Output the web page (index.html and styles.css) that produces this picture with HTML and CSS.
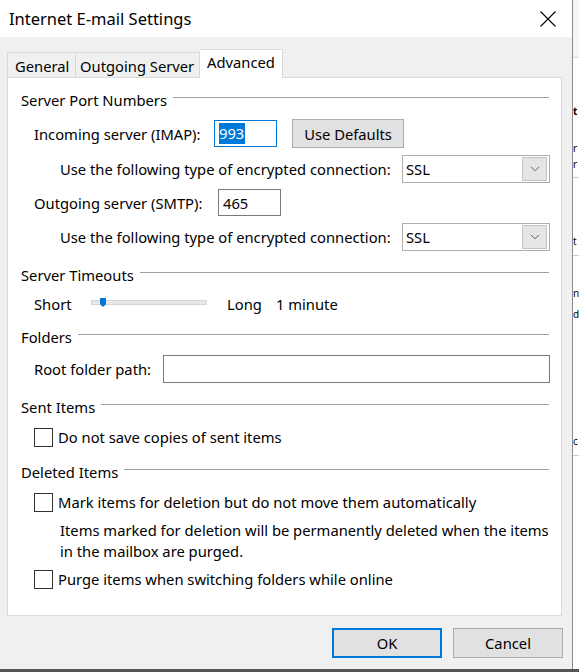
FILE: index.html
```html
<!DOCTYPE html>
<html>
<head>
<meta charset="utf-8">
<link rel="stylesheet" href="styles.css">
</head>
<body>
<div class="screen">
  <div class="dialog">
    <div class="titlebar">
      <span class="title">Internet E-mail Settings</span>
      <svg class="close" width="16" height="16" viewBox="0 0 16 16"><path d="M0.5 0.5 L15.5 15.5 M15.5 0.5 L0.5 15.5" stroke="#000" stroke-width="1.1" fill="none"/></svg>
    </div>
    <div class="body">
      <div class="tabs">
        <div class="tab tab-general">General</div>
        <div class="tab tab-outgoing">Outgoing Server</div>
        <div class="tab tab-active">Advanced</div>
      </div>
      <div class="panel">
        <div class="group g-ports"><span class="glabel">Server Port Numbers</span><span class="gline"></span></div>
        <div class="row r-imap">
          <span class="lbl lbl-imap">Incoming server (IMAP):</span>
          <span class="input port focused"><span class="sel">993</span></span>
          <span class="btn btn-defaults">Use Defaults</span>
        </div>
        <div class="row r-enc1">
          <span class="lbl">Use the following type of encrypted connection:</span>
          <span class="combo"><span class="combo-text">SSL</span><span class="combo-arrow"><svg width="10" height="6" viewBox="0 0 10 6"><path d="M1 0.8 L5 4.8 L9 0.8" stroke="#606060" stroke-width="1" fill="none"/></svg></span></span>
        </div>
        <div class="row r-smtp">
          <span class="lbl lbl-smtp">Outgoing server (SMTP):</span>
          <span class="input port">465</span>
        </div>
        <div class="row r-enc2">
          <span class="lbl">Use the following type of encrypted connection:</span>
          <span class="combo"><span class="combo-text">SSL</span><span class="combo-arrow"><svg width="10" height="6" viewBox="0 0 10 6"><path d="M1 0.8 L5 4.8 L9 0.8" stroke="#606060" stroke-width="1" fill="none"/></svg></span></span>
        </div>
        <div class="group g-timeouts"><span class="glabel">Server Timeouts</span><span class="gline"></span></div>
        <div class="row r-slider">
          <span class="lbl lbl-short">Short</span>
          <span class="track"><span class="thumb"></span></span>
          <span class="lbl lbl-long">Long</span>
          <span class="lbl">1 minute</span>
        </div>
        <div class="group g-folders"><span class="glabel">Folders</span><span class="gline"></span></div>
        <div class="row r-root">
          <span class="lbl lbl-root">Root folder path:</span>
          <span class="input root"></span>
        </div>
        <div class="group g-sent"><span class="glabel">Sent Items</span><span class="gline"></span></div>
        <div class="row r-check r-sent">
          <span class="check"></span><span class="lbl">Do not save copies of sent items</span>
        </div>
        <div class="group g-deleted"><span class="glabel">Deleted Items</span><span class="gline"></span></div>
        <div class="row r-check r-mark">
          <span class="check"></span><span class="lbl">Mark items for deletion but do not move them automatically</span>
        </div>
        <div class="desc">Items marked for deletion will be permanently deleted when the items<br>in the mailbox are purged.</div>
        <div class="row r-check r-purge">
          <span class="check"></span><span class="lbl">Purge items when switching folders while online</span>
        </div>
      </div>
      <div class="buttons">
        <span class="btn btn-ok">OK</span>
        <span class="btn btn-cancel">Cancel</span>
      </div>
    </div>
  </div>
  <div class="behind">
    <div class="bh-top"></div>
    <div class="frag f-t">t</div>
    <div class="frag f-er">r</div>
    <div class="frag f-or">r</div>
    <div class="bh-line l1"></div>
    <div class="frag f-nt">t</div>
    <div class="bh-line l2"></div>
    <div class="frag f-n">n</div>
    <div class="frag f-d">d</div>
    <div class="frag f-c">c</div>
    <div class="bh-line l3"></div>
  </div>
</div>
<div class="bottom-edge"></div>
</body>
</html>
```

FILE: styles.css
```css
* { box-sizing: border-box; }
html, body { margin: 0; padding: 0; }
body {
  width: 579px;
  height: 672px;
  overflow: hidden;
  background: #fff;
  font-family: "Noto Sans", "Open Sans", sans-serif;
  font-size: 14.75px;
  color: #000;
}
.screen { display: flex; height: 669px; }
.dialog {
  width: 573px;
  height: 669px;
  border-right: 1px solid #8a8a8a;
  display: flex;
  flex-direction: column;
  background: #f0f0f0;
  flex-shrink: 0;
}
.titlebar {
  height: 37px;
  background: #fff;
  display: flex;
  align-items: center;
  padding-left: 9px;
  flex-shrink: 0;
}
.title { font-size: 16.5px; margin-top: -1px; }
.close { margin-left: auto; margin-right: 16px; margin-top: 1px; }
.body { flex: 1; display: flex; flex-direction: column; padding: 0 0 0 7px; }
.tabs { display: flex; align-items: flex-end; height: 40px; }
.tab {
  height: 25px;
  border: 1px solid #d9d9d9;
  border-bottom: none;
  background: #f0f0f0;
  display: flex;
  align-items: center;
  padding-top: 1px;
  white-space: nowrap;
}
.tab-general { width: 69px; padding-left: 7px; }
.tab-outgoing { width: 124px; padding-left: 4px; border-left: none; }
.tab-active {
  width: 83px;
  height: 29px;
  background: #fff;
  border-left: none;
  padding-left: 7px;
  padding-bottom: 5px;
  margin-bottom: -1px;
  position: relative;
  z-index: 1;
}
.panel {
  width: 555px;
  height: 539px;
  background: #fff;
  border: 1px solid #d9d9d9;
  padding: 12px 11px 0 13px;
  display: flex;
  flex-direction: column;
}
.group { display: flex; align-items: center; height: 20px; }
.glabel { white-space: nowrap; }
.gline { flex: 1; height: 1px; background: #a0a0a0; margin-left: 6px; margin-right: 1px; margin-top: -5px; }
.g-timeouts { margin-top: 14px; }
.g-folders { margin-top: 13px; }
.g-sent { margin-top: 14px; }
.g-deleted { margin-top: 15px; }
.row { display: flex; align-items: center; white-space: nowrap; }
.r-imap { height: 29px; margin-top: 9px; padding-left: 13px; }
.r-enc1 { height: 28px; margin-top: 7px; padding-left: 39px; }
.r-smtp { height: 27px; margin-top: 6px; padding-left: 13px; }
.r-enc2 { height: 28px; margin-top: 7px; padding-left: 39px; }
.r-slider { height: 20px; margin-top: 9px; padding-left: 13px; }
.r-root { height: 28px; margin-top: 8px; padding-left: 13px; }
.r-check { height: 20px; padding-left: 13px; }
.r-sent { margin-top: 10px; }
.r-mark { margin-top: 10px; }
.r-purge { margin-top: 7px; }
.lbl-imap { width: 180px; }
.lbl-smtp { width: 184px; }
.input {
  display: flex;
  align-items: center;
  background: #fff;
  border: 1px solid #7a7a7a;
  padding-left: 4px;
  flex-shrink: 0;
}
.port { width: 63px; height: 27px; }
.focused { border-color: #0078d7; }
.sel { background: #0078d7; color: #fff; padding: 1px 1px 1px 0; line-height: 19px; }
.btn {
  display: flex;
  align-items: center;
  justify-content: center;
  background: #e1e1e1;
  border: 1px solid #adadad;
  flex-shrink: 0;
}
.btn-defaults { width: 112px; height: 29px; margin-left: 15px; }
.combo {
  margin-left: auto;
  width: 148px;
  height: 28px;
  border: 1px solid #adadad;
  background: #fff;
  display: flex;
  align-items: center;
  padding: 1px 2px 1px 3px;
  flex-shrink: 0;
}
.combo-text { flex: 1; }
.combo-arrow {
  width: 25px;
  height: 24px;
  background: #e5e5e5;
  border: 1px solid #c4c4c4;
  display: flex;
  align-items: center;
  justify-content: center;
}
.lbl-short { width: 57px; }
.track {
  width: 116px;
  height: 5px;
  background: #e7e7e7;
  border: 1px solid #d6d6d6;
  margin-top: -3px;
  position: relative;
  flex-shrink: 0;
}
.thumb {
  position: absolute;
  left: 8px;
  top: -3px;
  width: 6px;
  height: 9px;
  background: #0078d7;
  clip-path: polygon(0 0, 100% 0, 100% 70%, 50% 100%, 0 70%);
}
.lbl-long { margin-left: 20px; width: 49px; }
.lbl-root { width: 130px; }
.root { width: 387px; height: 28px; }
.check { width: 19px; height: 19px; border: 1px solid #333; background: #fff; margin-right: 5px; flex-shrink: 0; }
.desc { margin-top: 8px; padding-left: 39px; line-height: 21px; white-space: nowrap; }
.buttons { display: flex; justify-content: flex-end; gap: 11px; padding-right: 9px; margin-top: 12px; }
.btn-ok { width: 110px; height: 30px; border: 2px solid #0078d7; }
.btn-cancel { width: 110px; height: 30px; }
.behind { width: 6px; height: 669px; overflow: hidden; background: #fff; font-size: 10px; line-height: 13px; }
.bh-top { height: 58px; background: #f5f5f5; border-bottom: 1px solid #ddd; }
.frag { white-space: nowrap; padding-left: 0; }
.f-t { margin-top: 47px; font-weight: bold; }
.f-er { margin-top: 24px; }
.f-or { margin-top: 3px; }
.bh-line { height: 1px; background: #ccc; }
.l1 { margin-top: 6px; }
.f-nt { margin-top: 57px; }
.l2 { margin-top: 7px; }
.f-n { margin-top: 31px; }
.f-d { margin-top: 8px; }
.f-c { margin-top: 114px; }
.l3 { margin-top: 7px; }
.bottom-edge { height: 3px; background: #555; }
```
